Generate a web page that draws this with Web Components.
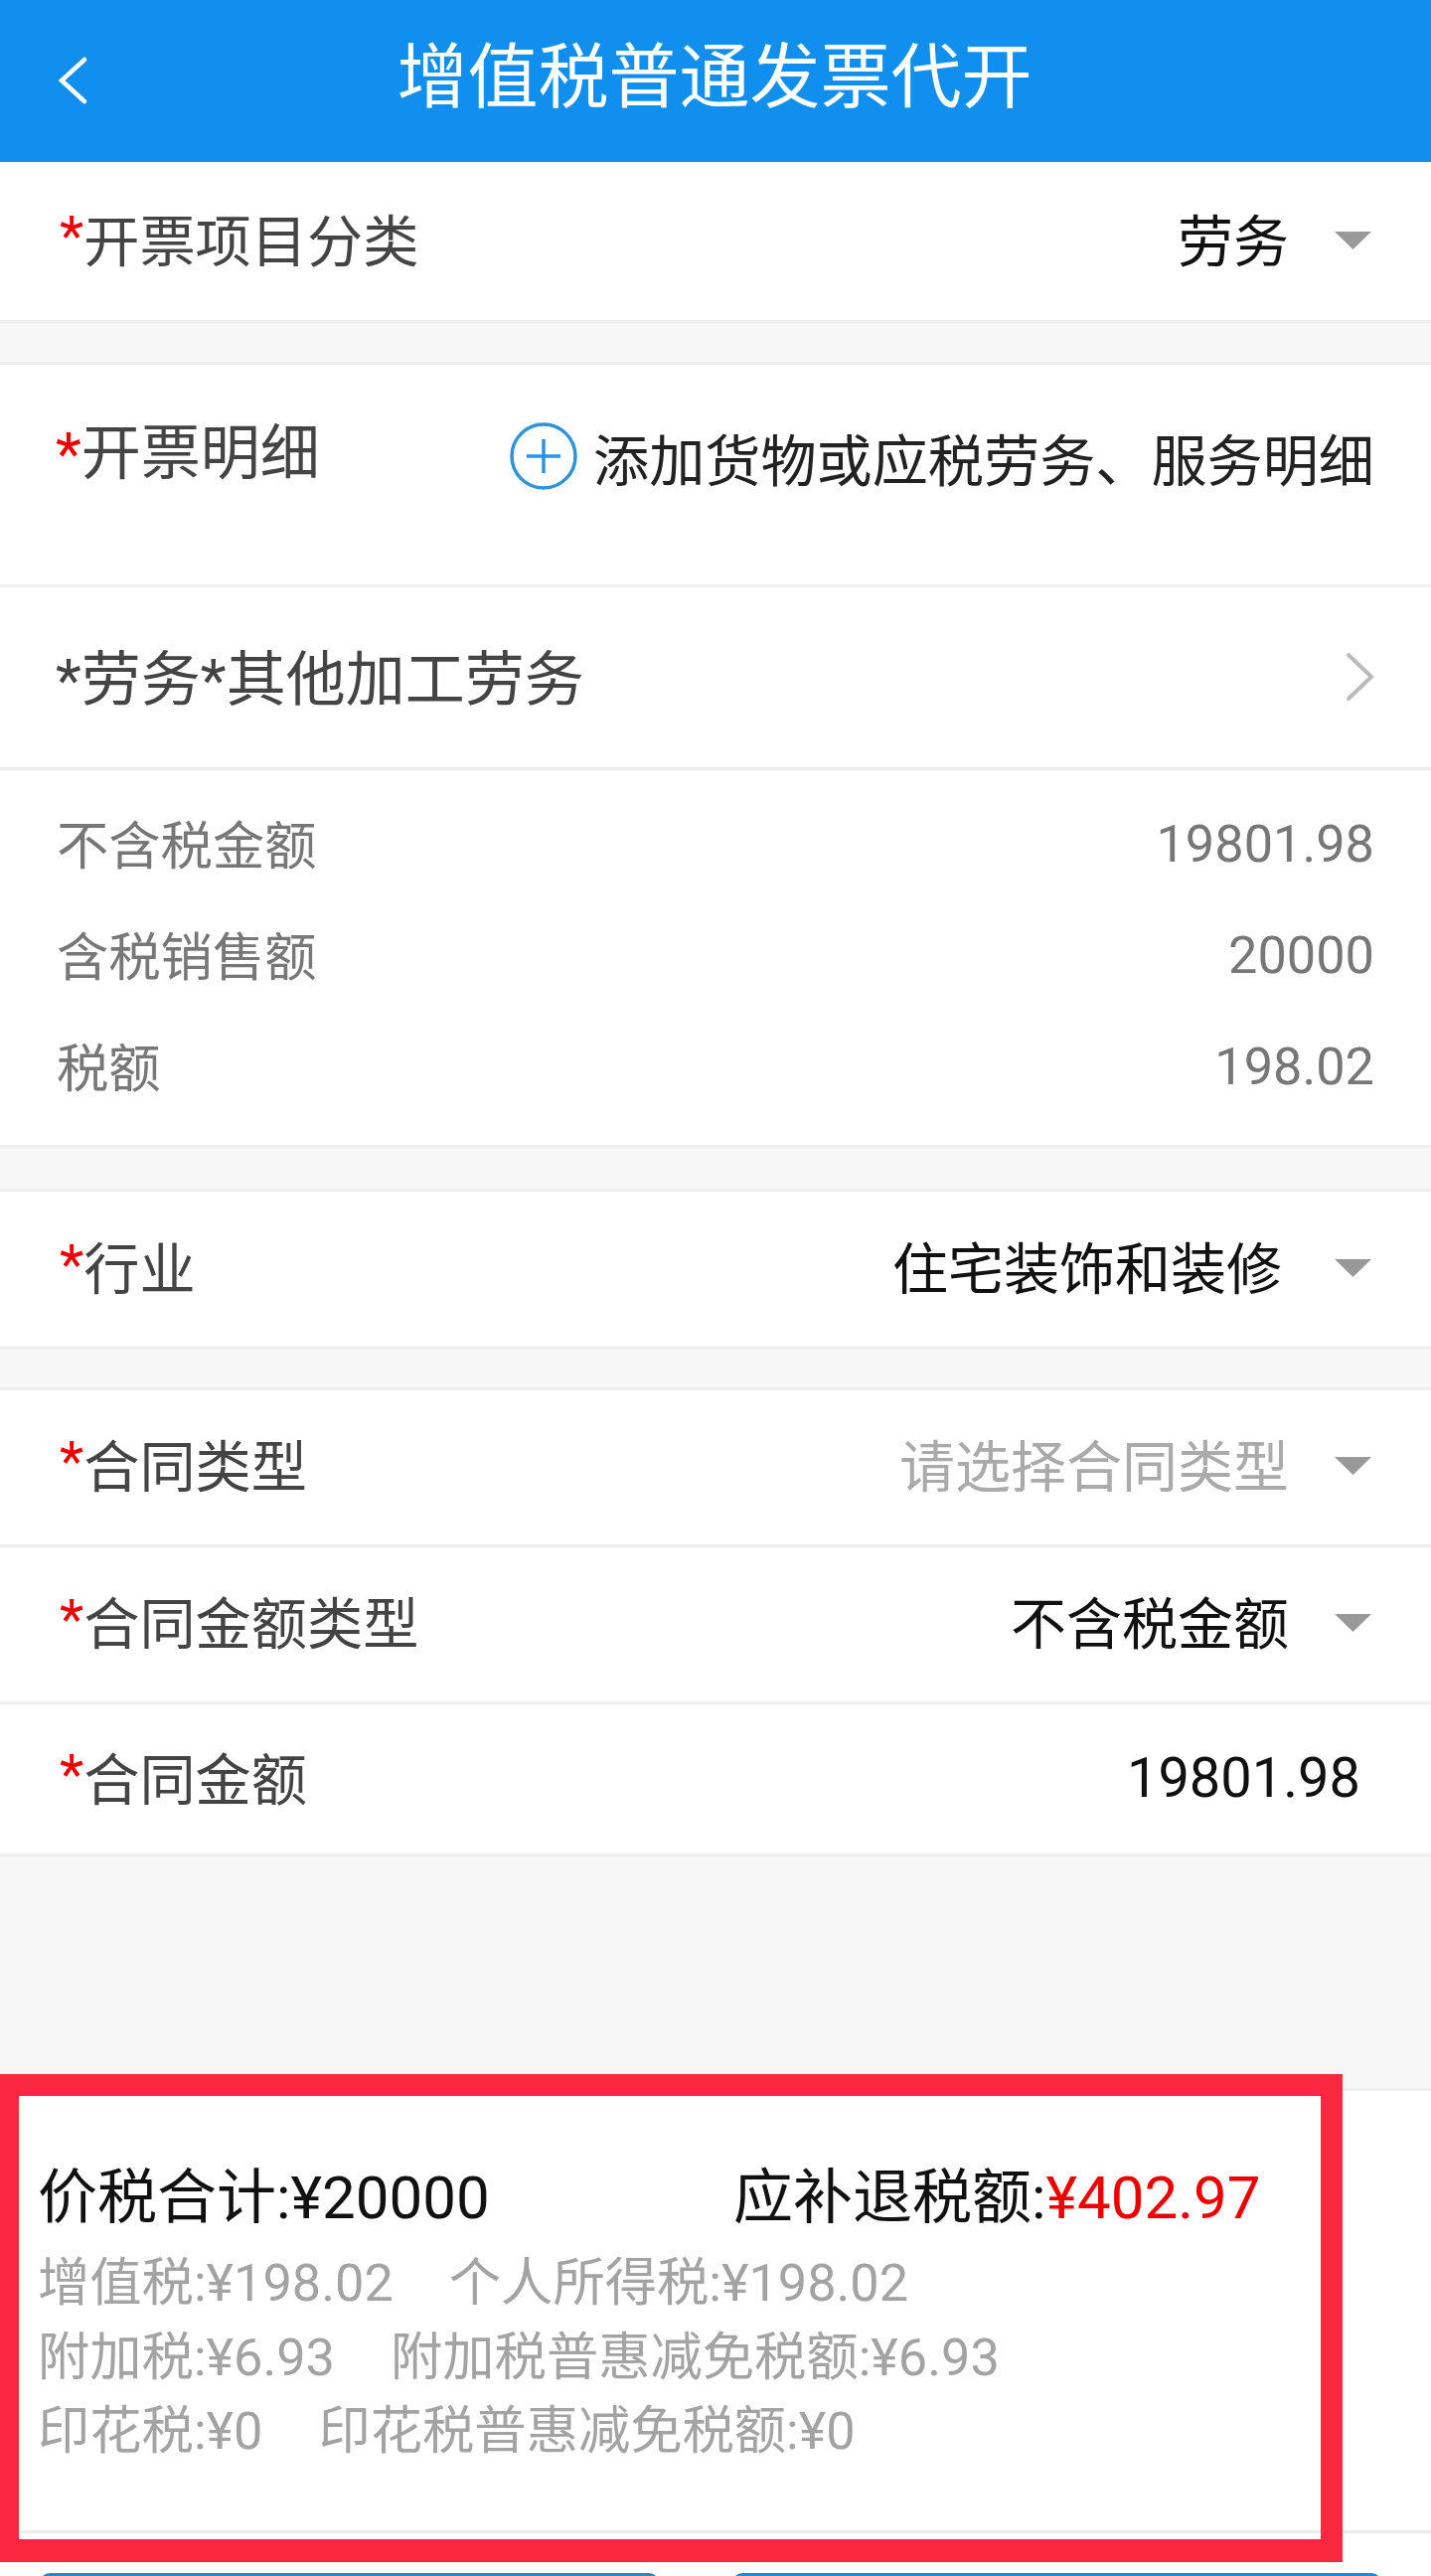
<!DOCTYPE html>
<html lang="zh"><head><meta charset="utf-8"><title>增值税普通发票代开</title>
<style>
html,body{margin:0;padding:0}
body{width:1440px;height:2592px;overflow:hidden;background:#f7f7f7;font-family:Roboto,"Noto Sans CJK SC",sans-serif;display:flex;flex-direction:column}
</style></head><body>
<app-header title="增值税普通发票代开"></app-header>
<form-row h="162" pb="9" required label="开票项目分类" value="劳务" arrow></form-row>
<sec-gap h="42"></sec-gap>
<add-row></add-row>
<link-row>*劳务*其他加工劳务</link-row>
<detail-box>
  <detail-row label="不含税金额" value="19801.98"></detail-row>
  <detail-row label="含税销售额" value="20000"></detail-row>
  <detail-row label="税额" value="198.02"></detail-row>
</detail-box>
<sec-gap h="44"></sec-gap>
<form-row h="159" pb="9" am="53" required label="行业" value="住宅装饰和装修" arrow></form-row>
<sec-gap h="41"></sec-gap>
<form-row h="158" pb="11" required label="合同类型" value="请选择合同类型" placeholder arrow></form-row>
<form-row h="158" pb="10" required label="合同金额类型" value="不含税金额" arrow></form-row>
<form-row h="153" pb="8" num required label="合同金额" value="19801.98"></form-row>
<sec-gap h="233" plain></sec-gap>
<summary-box></summary-box>
<action-bar></action-bar>
<highlight-box></highlight-box>
<script>
function def(name,html){customElements.define(name,class extends HTMLElement{connectedCallback(){if(this.shadowRoot)return;const s=this.attachShadow({mode:'open'});s.innerHTML=typeof html==='function'?html(this):html;}})}
def('app-header',e=>`<style>:host{display:flex;height:163px;flex:none;background:#118fee;color:#fff;align-items:center;justify-content:center;position:relative;box-sizing:border-box;padding:0 0 8px}
.t{font-size:71px;line-height:90px;margin-left:-2px}svg{position:absolute;left:56px;top:56px}</style>
<svg width="36" height="50" viewBox="0 0 36 50"><path d="M29 4 L6 25 L29 46" fill="none" stroke="#fff" stroke-width="4.5" stroke-linecap="round"/></svg><div class="t">${e.getAttribute('title')}</div>`);
def('sec-gap',e=>`<style>:host{display:block;flex:none;box-sizing:border-box;height:${e.getAttribute('h')}px;${e.hasAttribute('plain')?'':'border-bottom:3px solid #eee'}}</style>`);
const arrow=`<svg class="ar" width="37" height="18" viewBox="0 0 37 18"><path d="M0 0H37L18.500 18Z" fill="#999"/></svg>`;
def('form-row',e=>{const a=e.hasAttribute('arrow'),p=e.hasAttribute('placeholder');return `<style>:host{display:flex;flex:none;height:${e.getAttribute('h')}px;box-sizing:border-box;background:#fff;border-bottom:3px solid #eee;align-items:center;padding:0 ${a?60:71}px ${e.getAttribute('pb')}px 60px;color:#444;font-size:56.200px}
.l{flex:1;display:flex;align-items:center}.s{color:#e00}.v{color:${p?'#aaa':'#111'};font-size:56px;${e.hasAttribute('num')?'padding-top:5px':''}}.ar{margin-left:${e.getAttribute('am')||46}px;margin-top:7px}</style>
<div class="l"><span class="s">*</span>${e.getAttribute('label')}</div><div class="v">${e.getAttribute('value')}</div>${a?arrow:''}`});
def('add-row',`<style>:host{display:flex;flex:none;height:224px;box-sizing:border-box;background:#fff;border-bottom:3px solid #eee;padding:52px 57px 0 56px;font-size:60px;color:#444}
.l{flex:1;line-height:76px}.s{color:#e00}.a{display:flex;align-items:center;height:76px;color:#222;margin-top:2px}svg{margin-right:16px}.a span{font-size:56.150px}</style>
<div class="l"><span class="s">*</span>开票明细</div><div class="a"><svg width="68" height="68" viewBox="0 0 68 68"><circle cx="34" cy="34" r="32" fill="none" stroke="#2f93da" stroke-width="3.500"/><path d="M17 34H51M34 17V51" stroke="#2f93da" stroke-width="3.500"/></svg><span>添加货物或应税劳务、服务明细</span></div>`);
def('link-row',`<style>:host{display:flex;flex:none;height:184px;box-sizing:border-box;background:#fff;border-bottom:3px solid #eee;align-items:center;justify-content:space-between;padding:0 56px 7px 56px;font-size:60px;color:#444}svg{margin-top:6px}</style>
<slot></slot><svg width="30" height="50" viewBox="0 0 30 50"><path d="M3 3L26 25L3 47" fill="none" stroke="#bbb" stroke-width="4" stroke-linecap="round"/></svg>`);
def('detail-box',`<style>:host{display:flex;flex:none;flex-direction:column;height:380px;box-sizing:border-box;background:#fff;border-bottom:3px solid #eee;padding:16px 57px 0 57px}</style><slot></slot>`);
def('detail-row',e=>`<style>:host{display:flex;justify-content:space-between;align-items:center;height:112px;font-size:52.300px;color:#777}.n{padding-top:4px}</style><span>${e.getAttribute('label')}</span><span class="n">${e.getAttribute('value')}</span>`);
def('summary-box',`<style>:host{display:block;flex:none;height:448px;box-sizing:border-box;background:#fff;border-top:3px solid #eee;border-bottom:3px solid #eee;padding:60px 0 0 38px}
.m{display:flex;font-size:60px;line-height:96px;color:#111}.m>span:first-child{width:700px}.r{color:#e00}.g{font-size:52.300px;line-height:74.500px;color:#a3a3a3;white-space:pre}.g b{font-weight:400;margin-left:56px}</style>
<div class="m"><span>价税合计:¥20000</span><span>应补退税额:<span class="r">¥402.97</span></span></div>
<div class="g">增值税:¥198.02<b>个人所得税:¥198.02</b></div><div class="g">附加税:¥6.93<b>附加税普惠减免税额:¥6.93</b></div><div class="g">印花税:¥0<b>印花税普惠减免税额:¥0</b></div>`);
def('action-bar',`<style>:host{display:flex;flex:none;background:#fff;height:43px;padding:40px 50px 0 40px;gap:74px;box-sizing:border-box}div{height:40px;border-radius:10px;background:#2a86c8;width:623px}div+div{background:#1a8be0;width:653px}</style><div></div><div></div>`);
def('highlight-box',`<style>:host{position:absolute;left:0;top:2087px;width:1351px;height:491px;box-sizing:border-box;border:solid #fb263f;border-width:22px 22px 23px 19px}</style>`);
</script>
</body></html>
